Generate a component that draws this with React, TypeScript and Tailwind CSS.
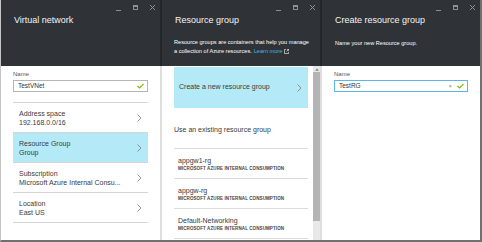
import React from "react";

const Chevron = () => (
  <svg width="5" height="8" viewBox="0 0 5 8" className="shrink-0">
    <polyline points="0.5,0.5 4,4 0.5,7.5" fill="none" stroke="#7a7a7a" strokeWidth="0.8" />
  </svg>
);

const Check = () => (
  <svg width="7" height="6" viewBox="0 0 7 6">
    <polyline points="0.5,3 2.6,5 6.5,0.8" fill="none" stroke="#7fba00" strokeWidth="1.2" />
  </svg>
);

const WindowIcons = () => (
  <div className="flex items-start justify-end gap-[12px] pr-[5px] pt-[5px] h-[10px]">
    <div className="w-[5px] h-[1px] bg-[#8b8e92] mt-[5px]" />
    <div className="w-[5px] h-[5px] border border-t-2 border-[#8b8e92]" />
    <svg width="5" height="5" viewBox="0 0 5 5">
      <path d="M0 0L5 5M5 0L0 5" stroke="#8b8e92" strokeWidth="1" />
    </svg>
  </div>
);

const Header: React.FC<{ title: string; children?: React.ReactNode; divider?: boolean }> = ({
  title,
  children,
  divider = true,
}) => (
  <div
    className={`h-[66px] shrink-0 bg-[#2f3338] flex flex-col ${divider ? "border-r-2 border-[#222529]" : ""}`}
  >
    <WindowIcons />
    <div className="pl-[13px] mt-[5px] text-[9px] leading-[11px] text-[#f4f4f4]">{title}</div>
    {children}
  </div>
);

const Field: React.FC<{ value: string; focused?: boolean }> = ({ value, focused }) => (
  <div className="pt-[4px]">
    <div className="text-[6px] leading-[8px] text-[#555]">Name</div>
    <div
      className={`mt-[2px] h-[12px] border flex items-center pl-[4px] pr-[3px] ${
        focused ? "border-[#5ab7e6]" : "border-[#b5b5b5]"
      }`}
    >
      <span className="flex-1 text-[6.5px] text-[#333]">{value}</span>
      {focused && <span className="text-[6px] text-[#888] mr-[5px] leading-none">×</span>}
      <Check />
    </div>
  </div>
);

const SettingRow: React.FC<{ label: string; value: string; active?: boolean }> = ({ label, value, active }) => (
  <div
    className={`h-[30px] border-b border-[#d4d4d4] flex items-center pl-[6px] pr-[6px] ${
      active ? "bg-[#b4eaf7]" : ""
    }`}
  >
    <div className="flex-1 text-[7px] leading-[9px] text-[#3a3a3a]">
      <div>{label}</div>
      <div>{value}</div>
    </div>
    <Chevron />
  </div>
);

const GroupRow: React.FC<{ name: string }> = ({ name }) => (
  <div className="h-[30px] border-b border-[#dcdcdc] pl-[4px] pt-[7px]">
    <div className="text-[7px] leading-[9px] text-[#3a3a3a]">{name}</div>
    <div className="text-[4.5px] leading-[7px] font-semibold text-[#444] tracking-[0.1px]">
      MICROSOFT AZURE INTERNAL CONSUMPTION
    </div>
  </div>
);

export default function App() {
  return (
    <div
      className="w-[482px] h-[242px] flex border-l border-r-2 border-b-2 border-l-[#c4c4c4] border-r-[#707070] border-b-[#707070] overflow-hidden bg-white"
      style={{ fontFamily: '"Liberation Sans", Arial, sans-serif' }}
    >
      {/* Virtual network */}
      <div className="w-[161px] flex flex-col">
        <Header title="Virtual network" />
        <div className="flex-1 border-r-2 border-[#dedede] pl-[12px] pr-[12px]">
          <Field value="TestVNet" />
          <div className="mt-[10px] border-t border-[#d4d4d4]">
            <SettingRow label="Address space" value="192.168.0.0/16" />
            <SettingRow label="Resource Group" value="Group" active />
            <SettingRow label="Subscription" value="Microsoft Azure Internal Consu..." />
            <SettingRow label="Location" value="East US" />
          </div>
        </div>
      </div>

      {/* Resource group */}
      <div className="w-[160px] flex flex-col">
        <Header title="Resource group">
          <div className="pl-[12px] pr-[6px] mt-[12px] text-[5.6px] leading-[9px] text-white">
            <div>Resource groups are containers that help you manage</div>
            <div className="flex items-center gap-[2px]">
              a collection of Azure resources. <span className="text-[#3fb4ee]">Learn more</span>
              <svg width="5" height="5" viewBox="0 0 5 5">
                <path d="M2 0.5H0.5V4.5H4.5V3M2.5 2.5L4.5 0.5M3 0.5H4.5V2" fill="none" stroke="#fff" strokeWidth="0.6" />
              </svg>
            </div>
          </div>
        </Header>
        <div className="flex-1 flex border-r-2 border-[#dedede] overflow-hidden">
          <div className="flex-1 pl-[12px] pr-[5px]">
            <div className="mt-[1px] h-[41px] bg-[#b4eaf7] flex items-center pl-[5px] pr-[6px]">
              <span className="flex-1 text-[7px] text-[#3a3a3a]">Create a new resource group</span>
              <Chevron />
            </div>
            <div className="mt-[17px] text-[7px] leading-[9px] text-[#3a3a3a]">Use an existing resource group</div>
            <div className="mt-[14px] border-t border-[#dcdcdc]">
              <GroupRow name="appgw1-rg" />
              <GroupRow name="appgw-rg" />
              <GroupRow name="Default-Networking" />
            </div>
          </div>
          <div className="w-[7px] flex flex-col bg-[#e8e8e8]">
            <div className="h-[6px] flex items-center justify-center bg-[#e8e8e8]">
              <svg width="4" height="3" viewBox="0 0 4 3">
                <path d="M0 3L2 0L4 3Z" fill="#999" />
              </svg>
            </div>
            <div className="h-[149px] bg-[#b4b4b4]" />
          </div>
        </div>
      </div>

      {/* Create resource group */}
      <div className="flex-1 flex flex-col">
        <Header title="Create resource group" divider={false}>
          <div className="pl-[13px] mt-[13px] text-[5.6px] leading-[9px] text-white">
            Name your new Resource group.
          </div>
        </Header>
        <div className="flex-1 pl-[12px] pr-[12px]">
          <Field value="TestRG" focused />
        </div>
      </div>
    </div>
  );
}
